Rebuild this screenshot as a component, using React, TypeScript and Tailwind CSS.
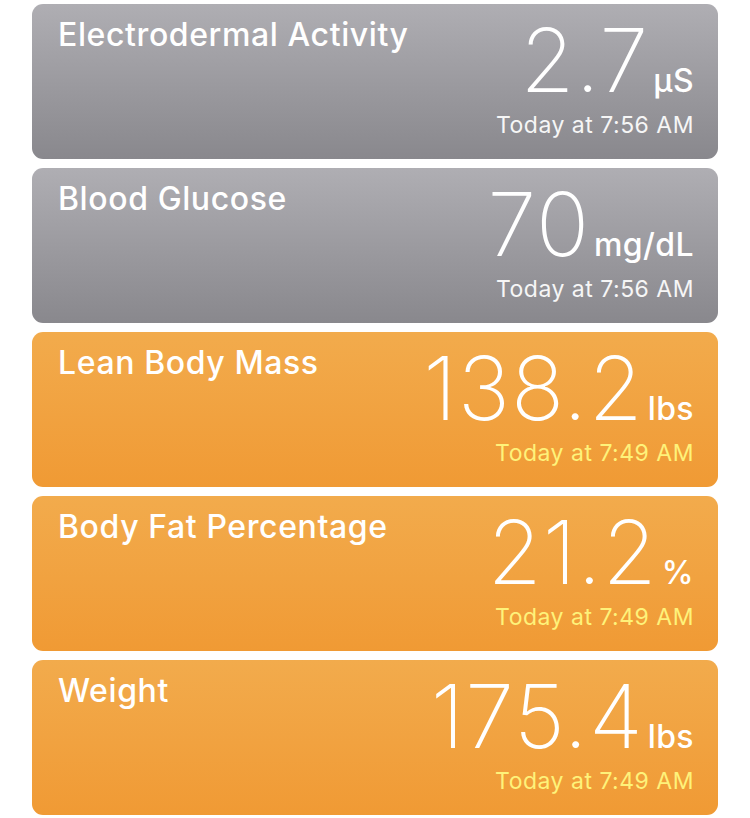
import React from "react";

type Item = {
  title: string;
  value: string;
  unit: string;
  time: string;
  tone: "gray" | "orange";
};

const items: Item[] = [
  { title: "Electrodermal Activity", value: "2.7", unit: "µS", time: "Today at 7:56 AM", tone: "gray" },
  { title: "Blood Glucose", value: "70", unit: "mg/dL", time: "Today at 7:56 AM", tone: "gray" },
  { title: "Lean Body Mass", value: "138.2", unit: "lbs", time: "Today at 7:49 AM", tone: "orange" },
  { title: "Body Fat Percentage", value: "21.2", unit: "%", time: "Today at 7:49 AM", tone: "orange" },
  { title: "Weight", value: "175.4", unit: "lbs", time: "Today at 7:49 AM", tone: "orange" },
];

function Card({ item }: { item: Item }) {
  const gray = item.tone === "gray";
  return (
    <div
      className={
        "flex h-[155px] justify-between rounded-[11px] pl-[26px] pr-[24px] pt-[12px] " +
        (gray
          ? "bg-gradient-to-b from-[#afaeb3] to-[#89888d]"
          : "bg-gradient-to-b from-[#f2ab4c] to-[#f09a34]")
      }
    >
      <div className="pt-[2px] text-[32px] font-medium leading-[34px] tracking-[0.6px] text-white">
        {item.title}
      </div>
      <div className="flex flex-col items-end">
        <div className="flex items-baseline text-white">
          <span className="text-[88px] font-extralight leading-[88px] tracking-[1px]">{item.value}</span>
          <span className="ml-[4px] text-[32px] font-medium leading-none tracking-[0.4px]">{item.unit}</span>
        </div>
        <div
          className={
            "mt-[7px] text-[23px] leading-[28px] tracking-[0.5px] " +
            (gray ? "text-[#f6f6f6]" : "text-[#fef27a]")
          }
        >
          {item.time}
        </div>
      </div>
    </div>
  );
}

export default function App() {
  return (
    <div
      className="min-h-[818px] w-[750px] bg-white pl-[32px] pr-[32px] pt-[4px]"
      style={{ fontFamily: "Inter, 'Noto Sans', sans-serif" }}
    >
      <div className="flex flex-col gap-[9px]">
        {items.map((it) => (
          <Card key={it.title} item={it} />
        ))}
      </div>
    </div>
  );
}
